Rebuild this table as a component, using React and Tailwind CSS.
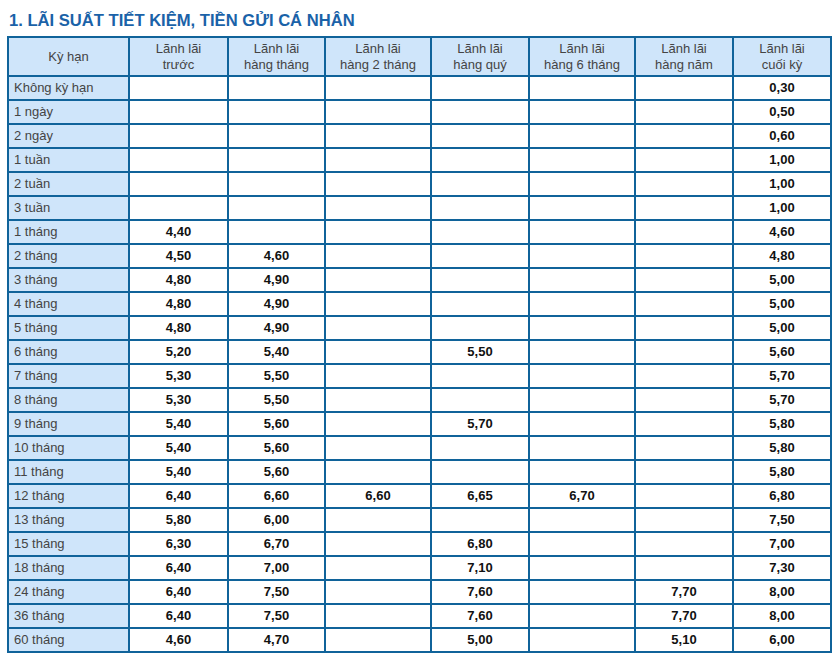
import React from 'react'

const headers = [
  ['Kỳ hạn'],
  ['Lãnh lãi', 'trước'],
  ['Lãnh lãi', 'hàng tháng'],
  ['Lãnh lãi', 'hàng 2 tháng'],
  ['Lãnh lãi', 'hàng quý'],
  ['Lãnh lãi', 'hàng 6 tháng'],
  ['Lãnh lãi', 'hàng năm'],
  ['Lãnh lãi', 'cuối kỳ'],
]

const widths = ['w-[121px]', 'w-[99px]', 'w-[97px]', 'w-[106px]', 'w-[98px]', 'w-[106px]', 'w-[98px]', 'w-[98px]']

// term, trước, hàng tháng, 2 tháng, quý, 6 tháng, năm, cuối kỳ
const rows = [
  ['Không kỳ hạn', '', '', '', '', '', '', '0,30'],
  ['1 ngày', '', '', '', '', '', '', '0,50'],
  ['2 ngày', '', '', '', '', '', '', '0,60'],
  ['1 tuần', '', '', '', '', '', '', '1,00'],
  ['2 tuần', '', '', '', '', '', '', '1,00'],
  ['3 tuần', '', '', '', '', '', '', '1,00'],
  ['1 tháng', '4,40', '', '', '', '', '', '4,60'],
  ['2 tháng', '4,50', '4,60', '', '', '', '', '4,80'],
  ['3 tháng', '4,80', '4,90', '', '', '', '', '5,00'],
  ['4 tháng', '4,80', '4,90', '', '', '', '', '5,00'],
  ['5 tháng', '4,80', '4,90', '', '', '', '', '5,00'],
  ['6 tháng', '5,20', '5,40', '', '5,50', '', '', '5,60'],
  ['7 tháng', '5,30', '5,50', '', '', '', '', '5,70'],
  ['8 tháng', '5,30', '5,50', '', '', '', '', '5,70'],
  ['9 tháng', '5,40', '5,60', '', '5,70', '', '', '5,80'],
  ['10 tháng', '5,40', '5,60', '', '', '', '', '5,80'],
  ['11 tháng', '5,40', '5,60', '', '', '', '', '5,80'],
  ['12 tháng', '6,40', '6,60', '6,60', '6,65', '6,70', '', '6,80'],
  ['13 tháng', '5,80', '6,00', '', '', '', '', '7,50'],
  ['15 tháng', '6,30', '6,70', '', '6,80', '', '', '7,00'],
  ['18 tháng', '6,40', '7,00', '', '7,10', '', '', '7,30'],
  ['24 tháng', '6,40', '7,50', '', '7,60', '', '7,70', '8,00'],
  ['36 tháng', '6,40', '7,50', '', '7,60', '', '7,70', '8,00'],
  ['60 tháng', '4,60', '4,70', '', '5,00', '', '5,10', '6,00'],
]

export default function App() {
  return (
    <div className="bg-white px-[7px] pt-[11px] font-['Liberation_Sans',Arial,sans-serif]">
      <h1 className="pl-[2px] text-[16.6px] leading-[20px] font-bold text-[#1a62a8]">
        1. LÃI SUẤT TIẾT KIỆM, TIỀN GỬI CÁ NHÂN
      </h1>
      <table className="mt-[5px] w-[823px] table-fixed border-collapse text-[13px]">
        <colgroup>
          {widths.map((w, i) => (
            <col key={i} className={w} />
          ))}
        </colgroup>
        <thead>
          <tr className="h-[39px] bg-[#cfe5fa] text-[#444]">
            {headers.map((h, i) => (
              <th key={i} className="border-2 border-[#10639a] px-1 text-center leading-[16px] font-normal">
                {h.map((line) => (
                  <div key={line}>{line}</div>
                ))}
              </th>
            ))}
          </tr>
        </thead>
        <tbody>
          {rows.map((r) => (
            <tr key={r[0]} className="h-[24px]">
              <td className="border-2 border-[#10639a] bg-[#cfe5fa] px-[5px] text-left text-[#444]">{r[0]}</td>
              {r.slice(1).map((v, i) => (
                <td key={i} className="border-2 border-[#10639a] text-center font-bold text-[#111]">
                  {v}
                </td>
              ))}
            </tr>
          ))}
        </tbody>
      </table>
    </div>
  )
}
